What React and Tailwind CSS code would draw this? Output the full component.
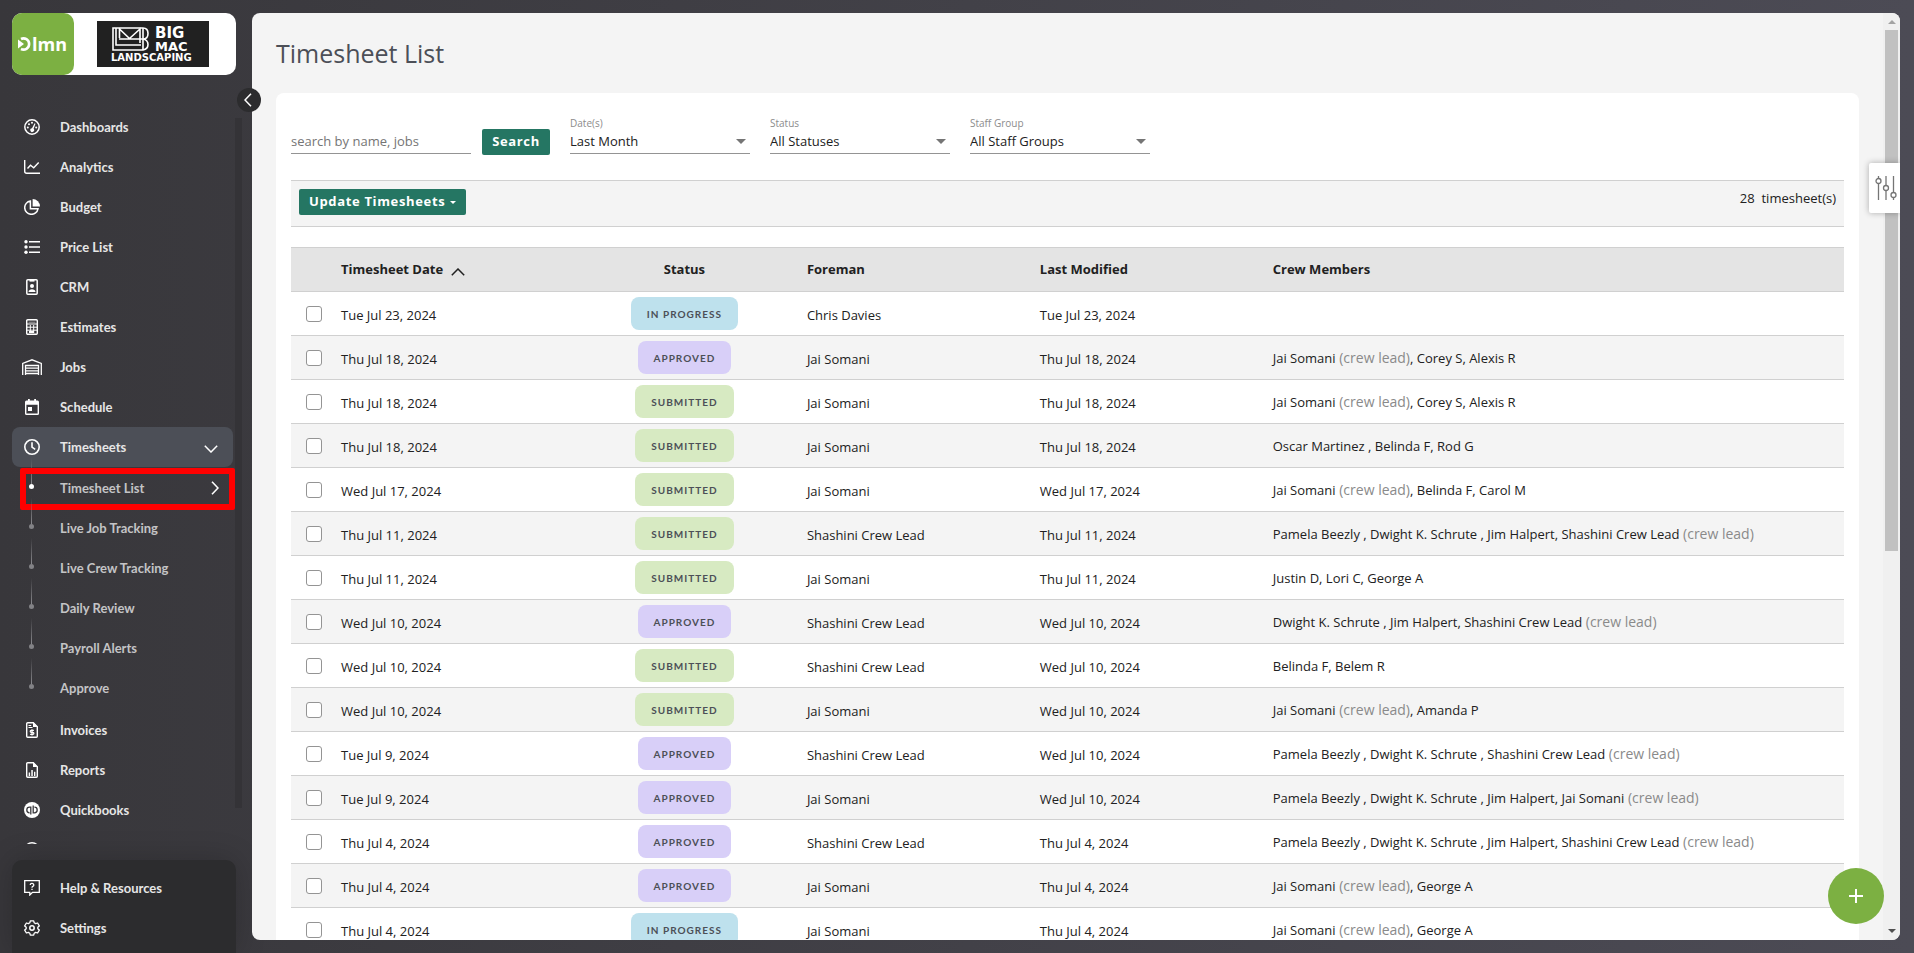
import { useState } from 'react'

const BADGES = {
  'In Progress': 'bg-[#bee1ed]',
  Approved: 'bg-[#d8cff8]',
  Submitted: 'bg-[#d7eac2]',
}

const LEAD = ' (crew lead)'

const TIMESHEETS = [
  { date: 'Tue Jul 23, 2024', status: 'In Progress', foreman: 'Chris Davies', modified: 'Tue Jul 23, 2024', crew: '' },
  { date: 'Thu Jul 18, 2024', status: 'Approved', foreman: 'Jai Somani', modified: 'Thu Jul 18, 2024', crew: 'Jai Somani (crew lead), Corey S, Alexis R' },
  { date: 'Thu Jul 18, 2024', status: 'Submitted', foreman: 'Jai Somani', modified: 'Thu Jul 18, 2024', crew: 'Jai Somani (crew lead), Corey S, Alexis R' },
  { date: 'Thu Jul 18, 2024', status: 'Submitted', foreman: 'Jai Somani', modified: 'Thu Jul 18, 2024', crew: 'Oscar Martinez , Belinda F, Rod G' },
  { date: 'Wed Jul 17, 2024', status: 'Submitted', foreman: 'Jai Somani', modified: 'Wed Jul 17, 2024', crew: 'Jai Somani (crew lead), Belinda F, Carol M' },
  { date: 'Thu Jul 11, 2024', status: 'Submitted', foreman: 'Shashini Crew Lead', modified: 'Thu Jul 11, 2024', crew: 'Pamela Beezly , Dwight K. Schrute , Jim Halpert, Shashini Crew Lead (crew lead)' },
  { date: 'Thu Jul 11, 2024', status: 'Submitted', foreman: 'Jai Somani', modified: 'Thu Jul 11, 2024', crew: 'Justin D, Lori C, George A' },
  { date: 'Wed Jul 10, 2024', status: 'Approved', foreman: 'Shashini Crew Lead', modified: 'Wed Jul 10, 2024', crew: 'Dwight K. Schrute , Jim Halpert, Shashini Crew Lead (crew lead)' },
  { date: 'Wed Jul 10, 2024', status: 'Submitted', foreman: 'Shashini Crew Lead', modified: 'Wed Jul 10, 2024', crew: 'Belinda F, Belem R' },
  { date: 'Wed Jul 10, 2024', status: 'Submitted', foreman: 'Jai Somani', modified: 'Wed Jul 10, 2024', crew: 'Jai Somani (crew lead), Amanda P' },
  { date: 'Tue Jul 9, 2024', status: 'Approved', foreman: 'Shashini Crew Lead', modified: 'Wed Jul 10, 2024', crew: 'Pamela Beezly , Dwight K. Schrute , Shashini Crew Lead (crew lead)' },
  { date: 'Tue Jul 9, 2024', status: 'Approved', foreman: 'Jai Somani', modified: 'Wed Jul 10, 2024', crew: 'Pamela Beezly , Dwight K. Schrute , Jim Halpert, Jai Somani (crew lead)' },
  { date: 'Thu Jul 4, 2024', status: 'Approved', foreman: 'Shashini Crew Lead', modified: 'Thu Jul 4, 2024', crew: 'Pamela Beezly , Dwight K. Schrute , Jim Halpert, Shashini Crew Lead (crew lead)' },
  { date: 'Thu Jul 4, 2024', status: 'Approved', foreman: 'Jai Somani', modified: 'Thu Jul 4, 2024', crew: 'Jai Somani (crew lead), George A' },
  { date: 'Thu Jul 4, 2024', status: 'In Progress', foreman: 'Jai Somani', modified: 'Thu Jul 4, 2024', crew: 'Jai Somani (crew lead), George A' },
]

const ICONS = {
  dashboards: (
    <>
      <circle cx="8" cy="8" r="7.2" fill="none" stroke="currentColor" strokeWidth="1.5" />
      <circle cx="3.8" cy="8.4" r="1" />
      <circle cx="5" cy="5.2" r="1" />
      <circle cx="8" cy="3.8" r="1" />
      <circle cx="12.2" cy="8.4" r="1" />
      <path d="M10.6 4.2l.9.5-1.9 5.1a1.9 1.9 0 1 1-1.6-.6z" />
    </>
  ),
  analytics: (
    <path d="M.7 1v11.3a2 2 0 0 0 2 2H16M3.5 9.5l3-3.2 3.2 2.4 5-5.2" fill="none" stroke="currentColor" strokeWidth="1.4" />
  ),
  budget: (
    <>
      <path d="M6.4 2A6.7 6.7 0 1 0 14 9.8H6.4z" fill="none" stroke="currentColor" strokeWidth="1.5" />
      <path d="M8.6 0A7.4 7.4 0 0 1 16 7.4H8.6z" />
    </>
  ),
  priceList: (
    <>
      <circle cx="2" cy="2.8" r="1.7" />
      <circle cx="2" cy="8" r="1.7" />
      <circle cx="2" cy="13.2" r="1.7" />
      <path d="M5 2h11v1.6H5zM5 7.2h11v1.6H5zM5 12.4h11V14H5z" />
    </>
  ),
  crm: (
    <>
      <rect x="2.8" y=".8" width="10.4" height="14.4" rx="1" fill="none" stroke="currentColor" strokeWidth="1.5" />
      <path d="M5.5 1h5v1.6h-5z" />
      <circle cx="8" cy="7" r="2" />
      <path d="M4.5 13c0-3.6 7-3.6 7 0z" />
    </>
  ),
  estimates: (
    <>
      <rect x="2.7" y=".7" width="10.6" height="14.6" rx="1" fill="none" stroke="currentColor" strokeWidth="1.4" />
      <path d="M3 5h10M3 8.2h10M3 11.2h10M6.3 6v8M9.7 6v8" fill="none" stroke="currentColor" strokeWidth="1" />
      <path d="M4.6 2.6h6.8V4H4.6z" opacity=".35" />
      <path d="M5 12h5v2H5z" />
    </>
  ),
  schedule: (
    <>
      <path d="M4 0h1.8v2H4zM10.2 0H12v2h-1.8z" />
      <path fillRule="evenodd" d="M2.5 1.6h11A1.5 1.5 0 0 1 15 3.1v11.4a1.5 1.5 0 0 1-1.5 1.5h-11A1.5 1.5 0 0 1 1 14.5V3.1a1.5 1.5 0 0 1 1.5-1.5zM2.4 5.8v8.8h11.2V5.8z" />
      <path d="M4 8h4v4H4z" />
    </>
  ),
  timesheets: (
    <path d="M8 3.2v5l3.2 2.2M15.2 8A7.2 7.2 0 1 1 .8 8a7.2 7.2 0 0 1 14.4 0z" fill="none" stroke="currentColor" strokeWidth="1.6" />
  ),
  invoices: (
    <>
      <path d="M9.3.7H3.7a1 1 0 0 0-1 1v12.6a1 1 0 0 0 1 1h8.6a1 1 0 0 0 1-1V4.7z" fill="none" stroke="currentColor" strokeWidth="1.4" />
      <path d="M9 0l5 5H9zM4.5 3h2.7v1H4.5zM4.5 5h4v1h-4z" />
      <path d="M9.9 8.3H7.2a1 1 0 0 0 0 2h1.7a1 1 0 0 1 0 2H6.1M8 7.2v6.2" fill="none" stroke="currentColor" strokeWidth="1.2" />
    </>
  ),
  reports: (
    <>
      <path d="M9.3.7H3.7a1 1 0 0 0-1 1v12.6a1 1 0 0 0 1 1h8.6a1 1 0 0 0 1-1V4.7z" fill="none" stroke="currentColor" strokeWidth="1.4" />
      <path d="M9 0l5 5H9zM4.7 10.5h1.4V14H4.7zM7.3 8h1.5v6H7.3zM10 9.8h1.4V14H10z" />
    </>
  ),
  quickbooks: (
    <>
      <circle cx="8" cy="8" r="8" />
      <path d="M6.8 12.6V5.2H5.6a2.8 2.8 0 0 0 0 5.6M9.2 3.4v7.4h1.2a2.8 2.8 0 0 0 0-5.6" fill="none" stroke="#39383c" strokeWidth="1.3" />
    </>
  ),
  more: <circle cx="8" cy="8" r="7.3" fill="none" stroke="currentColor" strokeWidth="1.4" />,
  help: (
    <>
      <path d="M.7.7h14.6v11.6H8.5L5.8 15v-2.7H.7z" fill="none" stroke="currentColor" strokeWidth="1.3" />
      <path d="M6.2 5a1.8 1.6 0 1 1 2.6 1.4c-.6.3-.8.6-.8 1.3M8 8.7v1.3" fill="none" stroke="currentColor" strokeWidth="1.3" />
    </>
  ),
  settings: (
    <>
      <path d="M6.3.8h3.4l.5 2 1.4.8 2-.6 1.7 2.9-1.5 1.4v1.4l1.5 1.4-1.7 2.9-2-.6-1.4.8-.5 2H6.3l-.5-2-1.4-.8-2 .6L.7 10.1l1.5-1.4V7.3L.7 5.9 2.4 3l2 .6 1.4-.8z" fill="none" stroke="currentColor" strokeWidth="1.3" strokeLinejoin="round" />
      <circle cx="8" cy="8" r="2.2" fill="none" stroke="currentColor" strokeWidth="1.5" />
    </>
  ),
}

function Icon({ name }) {
  if (name === 'jobs') {
    return (
      <svg viewBox="0 0 20 16" className="h-4 w-5 shrink-0" fill="none" stroke="currentColor" strokeWidth="1.3" aria-hidden="true">
        <path d="M.7 16V4.5L10 .8l9.3 3.7V16M3.5 16V6.5h13V16M3.5 9.2h13M3.5 11.8h13M3.5 14.5h13" />
      </svg>
    )
  }
  return (
    <svg viewBox="0 0 16 16" className="h-4 w-4 shrink-0" fill="currentColor" aria-hidden="true">
      {ICONS[name]}
    </svg>
  )
}

function NavItem({ icon, label, active, children }) {
  return (
    <a
      href="#"
      className={`flex h-10 shrink-0 items-center gap-5 rounded-lg px-3 text-[13px] font-bold text-[#e6e6e6] ${active ? 'bg-[#4c4f57]' : ''}`}
    >
      <span className="flex w-4 shrink-0 justify-center text-white">
        <Icon name={icon} />
      </span>
      <span className="pt-0.5">{label}</span>
      {children}
    </a>
  )
}

function SubItem({ label, current }) {
  return (
    <li className="relative">
      <a href="#" className="flex h-10 items-center gap-[26px] pr-3 pl-[17px] text-[13px] font-bold text-[#c4c4c6]">
        <span className="flex h-full w-[5px] flex-col items-center">
          <span className="-mt-2.5 h-[26px] w-px shrink-0 bg-linear-to-b from-transparent to-[#8a8a8e]" />
          <span className={`h-[5px] w-[5px] shrink-0 rounded-full ${current ? 'bg-white' : 'bg-[#828286]'}`} />
        </span>
        <span className="pt-0.5">{label}</span>
        {current && (
          <svg viewBox="0 0 8 14" className="ml-auto h-3.5 w-2" fill="none" stroke="white" strokeWidth="1.6" aria-hidden="true">
            <path d="M1 .8L7 7l-6 6.2" />
          </svg>
        )}
      </a>
      {current && <span className="pointer-events-none absolute top-0 -right-1 left-2 h-[42px] rounded-xs border-6 border-[#ff0000]" />}
    </li>
  )
}

function Logo() {
  return (
    <div className="flex h-[62px] w-[224px] shrink-0 rounded-[10px] bg-white">
      <a href="#" aria-label="LMN home" className="flex h-[62px] w-[62px] items-center justify-center rounded-[10px] bg-[#7cb042]">
        <svg viewBox="0 0 62 62" className="h-full w-full">
          <path d="M9 26a5.6 5.6 0 1 1 0 10" fill="none" stroke="white" strokeWidth="2.6" />
          <path d="M6 26.5l6 4.5-6 4.5z" fill="white" />
          <text x="20" y="38" fontFamily="Open Sans, sans-serif" fontWeight="700" fontSize="18" fill="white">lmn</text>
        </svg>
      </a>
      <div className="flex flex-1 items-center justify-center pr-1">
        <svg viewBox="0 0 112 46" className="h-[46px] w-28" role="img" aria-label="Big Mac Landscaping">
          <rect width="112" height="46" fill="#212121" />
          <g fill="none" stroke="white" strokeWidth="1.6">
            <path d="M16 7h30q5 0 5 5.5T46 18q5 1 5 5.5T46 29H16z" />
            <path d="M19 7v17h25M22.5 7v10M22.5 8l10 9.5L43 8v14M46 7v22M22 18h24" />
          </g>
          <g fontFamily="DejaVu Sans, sans-serif" fontWeight="700" fill="white">
            <text x="58" y="17" fontSize="15">BIG</text>
            <text x="58" y="30" fontSize="13">MAC</text>
            <text x="14" y="40" fontSize="10">LANDSCAPING</text>
          </g>
        </svg>
      </div>
    </div>
  )
}

function Sidebar() {
  return (
    <aside className="relative flex w-[252px] shrink-0 flex-col pt-[13px] pl-3 font-[Lato,sans-serif]">
      <Logo />
      <div className="mt-8 mb-4 flex min-h-0 flex-1 pr-2.5">
        <nav className="flex flex-1 flex-col overflow-hidden pr-0.5">
          <NavItem icon="dashboards" label="Dashboards" />
          <NavItem icon="analytics" label="Analytics" />
          <NavItem icon="budget" label="Budget" />
          <NavItem icon="priceList" label="Price List" />
          <NavItem icon="crm" label="CRM" />
          <NavItem icon="estimates" label="Estimates" />
          <NavItem icon="jobs" label="Jobs" />
          <NavItem icon="schedule" label="Schedule" />
          <NavItem icon="timesheets" label="Timesheets" active>
            <svg viewBox="0 0 14 8" className="mt-1 mr-[3px] ml-auto h-2 w-3.5" fill="none" stroke="white" strokeWidth="1.5" aria-hidden="true">
              <path d="M.8.8L7 7l6.2-6.2" />
            </svg>
          </NavItem>
          <ul className="mt-px mr-0.5 mb-0.5">
            <SubItem label="Timesheet List" current />
            <SubItem label="Live Job Tracking" />
            <SubItem label="Live Crew Tracking" />
            <SubItem label="Daily Review" />
            <SubItem label="Payroll Alerts" />
            <SubItem label="Approve" />
          </ul>
          <NavItem icon="invoices" label="Invoices" />
          <NavItem icon="reports" label="Reports" />
          <NavItem icon="quickbooks" label="Quickbooks" />
          <NavItem icon="more" label="" />
        </nav>
        <div className="flex w-[7px] flex-col pt-[11px] pb-9">
          <span className="flex-1 bg-[#343337]" />
        </div>
      </div>
      <div className="flex w-[224px] flex-col rounded-t-[10px] bg-[#2c2c2e] pt-2 pb-[5px] shadow-[0_0_30px_rgba(0,0,0,0.2)]">
        <NavItem icon="help" label="Help & Resources" />
        <NavItem icon="settings" label="Settings" />
      </div>
      <button
        type="button"
        aria-label="Collapse menu"
        className="absolute top-[88px] -right-[9px] z-10 flex h-6 w-6 items-center justify-center rounded-full bg-[#2c2c2e]"
      >
        <svg viewBox="0 0 8 14" className="mr-0.5 h-3.5 w-2" fill="none" stroke="white" strokeWidth="1.5">
          <path d="M7 .8L1 7l6 6.2" />
        </svg>
      </button>
    </aside>
  )
}

function Filter({ id, label, options }) {
  return (
    <div className="relative w-[180px]">
      <label htmlFor={id} className="block text-[10px] leading-3 text-[#8c8c8c]">{label}</label>
      <select id={id} className="block h-[25px] w-full appearance-none border-b border-[#949494] pt-0.5 text-[13px] text-[#212121]">
        {options.map((o) => <option key={o}>{o}</option>)}
      </select>
      <svg viewBox="0 0 10 5" className="pointer-events-none absolute right-1 bottom-2.5 h-[5px] w-2.5" aria-hidden="true">
        <path d="M0 0h10L5 5z" fill="#757575" />
      </svg>
    </div>
  )
}

function Crew({ names }) {
  const [before, after] = names.split(LEAD)
  return (
    <>
      {before}
      {after !== undefined && <span className="text-sm leading-4 text-[#8a8a8a]">{LEAD}</span>}
      {after}
    </>
  )
}

function TimesheetTable() {
  return (
    <table className="mt-5 w-full table-fixed border-collapse text-left text-[13px] text-[#212121]">
      <thead>
        <tr className="h-11 border-y border-[#d0d0d0] bg-[#e4e4e4]">
          <th className="w-[42px]"></th>
          <th className="w-[15%] px-2 font-bold">
            <button type="button" className="flex items-center gap-2 font-bold">
              Timesheet Date
              <svg viewBox="0 0 14 8" className="mt-1 h-2 w-3.5" fill="none" stroke="#212121" strokeWidth="1.5" aria-hidden="true">
                <path d="M.8 7.2L7 1l6.2 6.2" />
              </svg>
            </button>
          </th>
          <th className="w-[15%] pr-2 pl-3 text-center font-bold">Status</th>
          <th className="w-[15%] px-2 font-bold">Foreman</th>
          <th className="w-[15%] px-2 font-bold">Last Modified</th>
          <th className="px-2 font-bold">Crew Members</th>
        </tr>
      </thead>
      <tbody>
        {TIMESHEETS.map((t, i) => (
          <tr key={i} className="h-11 border-b border-[#d0d0d0] even:bg-[#f4f4f4]">
            <td className="pl-[15px]">
              <input
                type="checkbox"
                aria-label={`Select timesheet ${t.date}, ${t.foreman}`}
                className="block h-4 w-4 appearance-none rounded-[3px] border border-[#949494] bg-white checked:bg-[#257663]"
              />
            </td>
            <td className="px-2 pt-1">{t.date}</td>
            <td className="pr-2 pl-3 text-center">
              <span className={`inline-flex h-[33px] items-center rounded-lg px-4 pt-0.5 align-middle font-[Lato,sans-serif] text-[10px] font-bold tracking-widest text-[#4c4f57] uppercase ${BADGES[t.status]}`}>
                {t.status}
              </span>
            </td>
            <td className="px-2 pt-1">{t.foreman}</td>
            <td className="px-2 pt-1">{t.modified}</td>
            <td className="truncate px-2 pt-0.5"><Crew names={t.crew} /></td>
          </tr>
        ))}
      </tbody>
    </table>
  )
}

export default function App() {
  const [query, setQuery] = useState('')

  return (
    <div className="flex h-screen overflow-hidden bg-linear-to-r from-[#38373b] to-[#4c4b55] font-['Open_Sans',sans-serif]">
      <Sidebar />

      <div className="relative my-[13px] mr-3.5 flex min-w-0 flex-1 overflow-hidden rounded-lg bg-[#f4f4f4]">
        <main className="min-w-0 flex-1 overflow-hidden px-6 pt-6">
          <h1 className="text-[25px] leading-8 font-medium text-[#4c4f57]">Timesheet List</h1>

          <section className="mt-6 rounded-lg bg-white px-[15px] pt-6">
            {/* Filters */}
            <form className="flex items-end gap-5" onSubmit={(e) => e.preventDefault()}>
              <div className="flex items-start gap-[11px]">
                <input
                  type="text"
                  aria-label="Search timesheets"
                  placeholder="search by name, jobs"
                  value={query}
                  onChange={(e) => setQuery(e.target.value)}
                  className="h-[25px] w-[180px] border-b border-[#949494] text-[13px] placeholder:text-[#757575]"
                />
                <button type="submit" className="-mb-px h-[26px] w-[68px] rounded-xs bg-[#257663] text-[13px] font-bold tracking-wider text-white">
                  Search
                </button>
              </div>
              <Filter id="dates" label="Date(s)" options={['Last Month', 'This Month']} />
              <Filter id="status" label="Status" options={['All Statuses', 'In Progress', 'Submitted', 'Approved']} />
              <Filter id="group" label="Staff Group" options={['All Staff Groups']} />
            </form>

            {/* Bulk actions */}
            <div className="mt-[26px] flex h-[47px] items-start justify-between border-y border-[#d0d0d0] bg-[#f4f4f4] px-2 pt-2">
              <button type="button" className="flex h-[26px] items-center gap-[5px] rounded-xs bg-[#257663] px-2.5 text-[13px] font-bold tracking-wider text-white">
                Update Timesheets
                <svg viewBox="0 0 6 3" className="h-[3px] w-1.5" aria-hidden="true">
                  <path d="M0 0h6L3 3z" fill="white" />
                </svg>
              </button>
              <p className="text-[13px] text-[#212121]">28&nbsp; timesheet(s)</p>
            </div>

            <TimesheetTable />
          </section>
        </main>

        {/* Scrollbar */}
        <div className="flex w-[17px] flex-col items-center bg-[#f0f0f0] pt-[7px] pb-[7px]" aria-hidden="true">
          <svg viewBox="0 0 8 4" className="h-1 w-2"><path d="M0 4h8L4 0z" fill="#a3a3a3" /></svg>
          <div className="mt-1.5 flex w-[13px] flex-1 flex-col">
            <span className="h-[58%] bg-[#c1c1c1]" />
          </div>
          <svg viewBox="0 0 8 4" className="h-1 w-2"><path d="M0 0h8L4 4z" fill="#505050" /></svg>
        </div>

        <button
          type="button"
          aria-label="Table settings"
          className="absolute top-[150px] right-0 flex h-[50px] w-[31px] items-center justify-center rounded-l-xs bg-white pl-0.5 shadow-[0_0_6px_rgba(0,0,0,0.3)]"
        >
          <svg viewBox="0 0 22 24" className="h-6 w-[22px]" fill="white" stroke="#757575" strokeWidth="1.3">
            <path d="M3.5 0v24M11 0v24M18.5 0v24" />
            <circle cx="3.5" cy="5" r="2.5" />
            <circle cx="11" cy="12" r="2.5" />
            <circle cx="18.5" cy="19" r="2.5" />
          </svg>
        </button>

        <button
          type="button"
          aria-label="Add timesheet"
          className="absolute right-4 bottom-4 flex h-14 w-14 items-center justify-center rounded-full bg-[#7cb042]"
        >
          <svg viewBox="0 0 14 14" className="h-3.5 w-3.5" stroke="white" strokeWidth="2">
            <path d="M7 0v14M0 7h14" />
          </svg>
        </button>
      </div>
    </div>
  )
}
